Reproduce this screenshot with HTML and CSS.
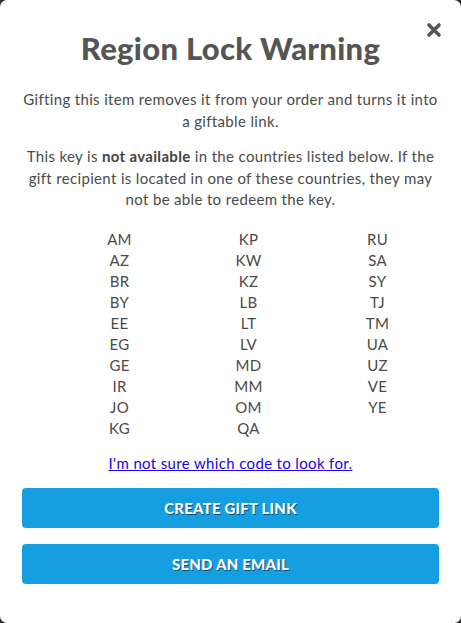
FILE: index.html
```html
<!DOCTYPE html>
<html>
<head>
<meta charset="utf-8">
<link rel="stylesheet" href="styles.css">
</head>
<body>
<div class="modal">
  <button class="close" aria-label="Close">
    <svg width="16" height="16" viewBox="0 0 16 16"><path d="M3 3 L13 13 M13 3 L3 13" stroke="#555" stroke-width="3.6" stroke-linecap="round"/></svg>
  </button>
  <h1 class="title">Region Lock Warning</h1>
  <p class="text">Gifting this item removes it from your order and turns it into a giftable link.</p>
  <p class="text">This key is <strong>not available</strong> in the countries listed below. If the gift recipient is located in one of these countries, they may not be able to redeem the key.</p>
  <div class="countries">
    <ul class="col">
      <li>AM</li><li>AZ</li><li>BR</li><li>BY</li><li>EE</li><li>EG</li><li>GE</li><li>IR</li><li>JO</li><li>KG</li>
    </ul>
    <ul class="col">
      <li>KP</li><li>KW</li><li>KZ</li><li>LB</li><li>LT</li><li>LV</li><li>MD</li><li>MM</li><li>OM</li><li>QA</li>
    </ul>
    <ul class="col">
      <li>RU</li><li>SA</li><li>SY</li><li>TJ</li><li>TM</li><li>UA</li><li>UZ</li><li>VE</li><li>YE</li>
    </ul>
  </div>
  <a class="help" href="#">I'm not sure which code to look for.</a>
  <div class="actions">
    <button class="btn">CREATE GIFT LINK</button>
    <button class="btn">SEND AN EMAIL</button>
  </div>
</div>
</body>
</html>
```
FILE: styles.css
```css
html, body {
  margin: 0;
  padding: 0;
  background: #2b2b2b;
}
.modal {
  position: relative;
  box-sizing: border-box;
  width: 461px;
  height: 623px;
  background: #fff;
  border-radius: 7px;
  padding: 26px 22px 0;
  display: flex;
  flex-direction: column;
  align-items: center;
  font-family: Lato, "Noto Sans", sans-serif;
  color: #4a4a4a;
}
.close {
  position: absolute;
  top: 22px;
  right: 19px;
  border: 0;
  background: none;
  padding: 0;
  width: 16px;
  height: 16px;
  cursor: pointer;
}
.close svg { display: block; }
.title {
  margin: 0;
  font-size: 31px;
  line-height: 44px;
  font-weight: 900;
  letter-spacing: 0.3px;
  color: #555;
}
.text {
  margin: 19px 0 0;
  font-size: 15px;
  line-height: 21.5px;
  letter-spacing: 0.34px;
  text-align: center;
}
.text + .text { margin-top: 14px; }
.text strong { font-weight: 700; color: #444; }
.countries {
  margin-top: 18px;
  width: 100%;
  display: grid;
  grid-template-columns: 129px 129px 129px;
  padding-left: 33px;
  box-sizing: border-box;
}
.col {
  list-style: none;
  margin: 0;
  padding: 0;
  text-align: center;
  font-size: 15px;
  line-height: 21px;
  letter-spacing: 0.3px;
}
.help {
  margin-top: 14px;
  font-size: 15px;
  line-height: 21px;
  letter-spacing: 0.35px;
  color: #2200ee;
}
.actions {
  margin-top: 14px;
  width: 100%;
  display: flex;
  flex-direction: column;
  gap: 16px;
}
.btn {
  height: 40px;
  border: 0;
  border-radius: 4px;
  background: #169fe0;
  color: #fff;
  font-family: Lato, sans-serif;
  font-weight: 900;
  font-size: 15px;
  letter-spacing: 0.2px;
  text-shadow: 1px 1px 0 rgba(0,0,0,0.5);
  cursor: pointer;
}
```
